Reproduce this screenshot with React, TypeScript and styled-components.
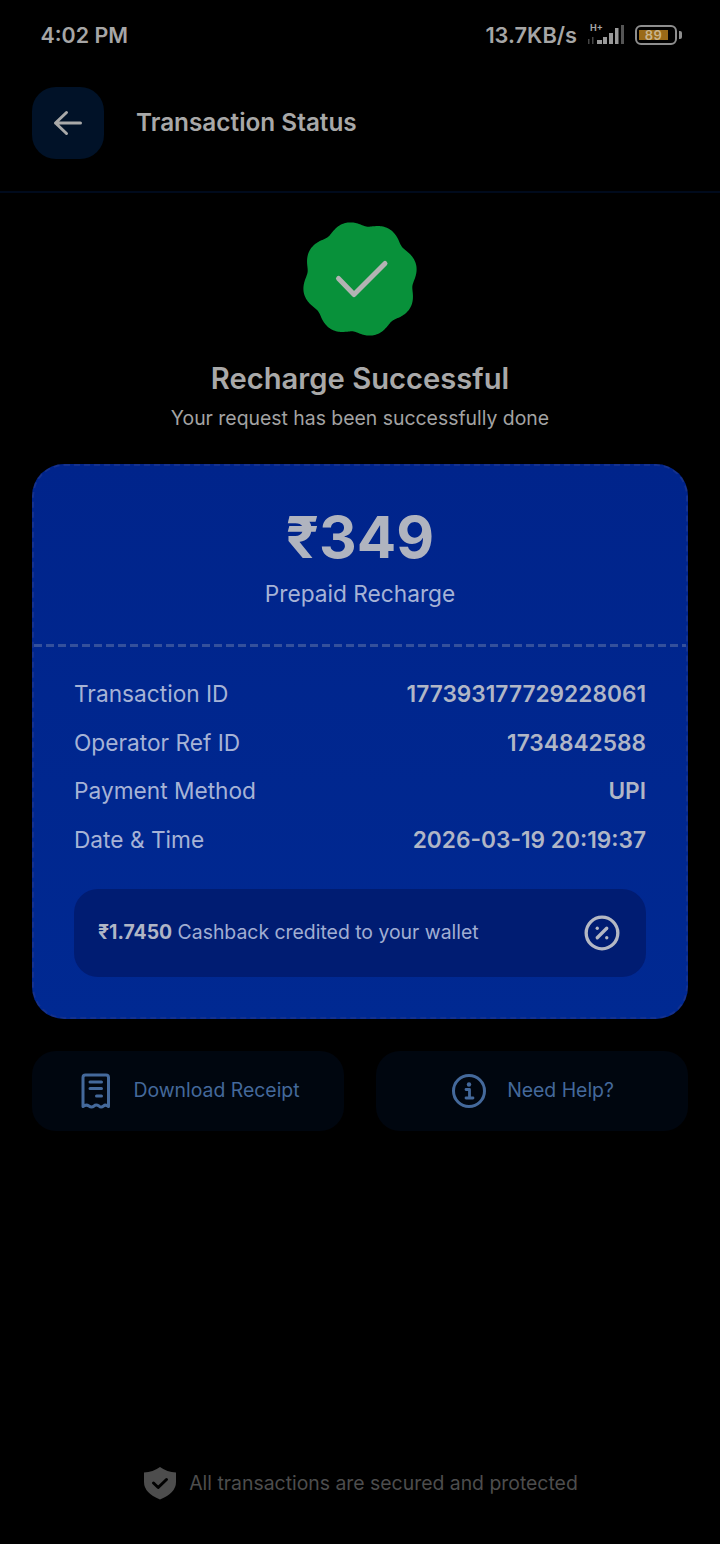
import React from 'react';
import styled, { createGlobalStyle } from 'styled-components';
import { CirclePercent } from 'lucide-react';

const GlobalStyle = createGlobalStyle`
  html, body {
    margin: 0;
    padding: 0;
    background: #000;
  }
  * {
    box-sizing: border-box;
  }
`;

const Page = styled.div`
  width: 720px;
  height: 1544px;
  background: #000;
  display: flex;
  flex-direction: column;
  font-family: Inter, "Noto Sans", sans-serif;
  color: #b3b3b3;
  overflow: hidden;
`;

const StatusBar = styled.div`
  height: 70px;
  padding: 0 37px 0 40.5px;
  display: flex;
  align-items: center;
  justify-content: space-between;
  font-size: 21.8px;
  font-weight: 600;
  color: #a6a6a6;
`;

const Clock = styled.span`
  font-size: 21.4px;
`;

const StatusRight = styled.div`
  display: flex;
  align-items: center;
  gap: 9px;
`;

const Signal = styled.div`
  position: relative;
  width: 38px;
  height: 24px;
`;

const SignalTag = styled.span`
  position: absolute;
  left: 4px;
  top: 0;
  font-size: 9px;
  line-height: 9px;
  font-weight: 700;
  color: #a6a6a6;
`;

const Battery = styled.div`
  width: 48px;
  height: 20px;
  margin-left: 2px;
  position: relative;
`;

const BatteryBody = styled.div`
  width: 42px;
  height: 20px;
  border: 2.5px solid #8e8e8e;
  border-radius: 6px;
  padding: 3px 2px;
  &::after {
    content: '';
    position: absolute;
    left: 44px;
    top: 6px;
    width: 2.5px;
    height: 8px;
    border-radius: 0 2px 2px 0;
    background: #8e8e8e;
  }
`;

const BatteryFill = styled.div`
  width: 29px;
  height: 10px;
  background: #9a6a17;
  font-size: 13px;
  line-height: 10px;
  font-weight: 600;
  text-align: center;
  color: #c9b48c;
  letter-spacing: 0.5px;
`;

const Header = styled.div`
  padding: 17px 32px 32px;
  display: flex;
  align-items: center;
  gap: 32px;
  border-bottom: 2px solid #000a1c;
`;

const BackButton = styled.div`
  width: 72px;
  height: 72px;
  border-radius: 24px;
  background: #011228;
  display: flex;
  align-items: center;
  justify-content: center;
`;

const HeaderTitle = styled.div`
  padding-bottom: 2px;
  font-size: 24.35px;
  font-weight: 600;
  color: #a8a8a8;
`;

const Hero = styled.div`
  padding-top: 29px;
  display: flex;
  flex-direction: column;
  align-items: center;
`;

const SuccessTitle = styled.div`
  margin-top: 23px;
  font-size: 29.2px;
  line-height: 40px;
  font-weight: 600;
  color: #a9a9a9;
`;

const SuccessSub = styled.div`
  margin-top: 4px;
  font-size: 19.4px;
  line-height: 30px;
  color: #a3a3a3;
`;

const Card = styled.div`
  margin: 31px 32px 0;
  height: 555px;
  border: 2px dashed #14318e;
  border-radius: 32px;
  background: linear-gradient(180deg, #00248b 0%, #002992 100%);
  background-origin: border-box;
  display: flex;
  flex-direction: column;
`;

const CardTop = styled.div`
  height: 178px;
  padding-top: 34px;
  text-align: center;
`;

const Amount = styled.div`
  font-size: 58.4px;
  line-height: 74px;
  font-weight: 700;
  color: #b0b4bf;
`;

const AmountLabel = styled.div`
  margin-top: 6px;
  font-size: 22.7px;
  line-height: 28px;
  color: #a6b3d6;
`;

const DashedLine = styled.div`
  height: 3px;
  background: repeating-linear-gradient(90deg, #34509c 0 8px, transparent 8px 12px);
`;

const CardBody = styled.div`
  flex: 1;
  padding: 33px 40px 40px;
  display: flex;
  flex-direction: column;
`;

const Rows = styled.div`
  display: flex;
  flex-direction: column;
  gap: 20.6px;
`;

const Row = styled.div`
  display: flex;
  justify-content: space-between;
  height: 28px;
  line-height: 28px;
  font-size: 22.7px;
`;

const RowLabel = styled.span`
  color: #a6b3d6;
`;

const RowValue = styled.span`
  font-weight: 600;
  color: #b0b6c6;
`;

const Cashback = styled.div`
  margin-top: 35px;
  height: 88px;
  padding: 0 24px;
  border-radius: 24px;
  background: #001c72;
  display: flex;
  align-items: center;
  justify-content: space-between;
  font-size: 19.4px;
  color: #a0aed2;
  span {
    padding-bottom: 2px;
  }
  b {
    font-weight: 700;
    color: #b0b6c6;
  }
  svg {
    color: #b4b8c4;
    margin-right: 1px;
  }
`;

const Actions = styled.div`
  margin: 32px 32px 0;
  display: grid;
  grid-template-columns: 1fr 1fr;
  gap: 32px;
`;

const ActionButton = styled.div`
  height: 80px;
  border-radius: 24px;
  background: #00060f;
  display: flex;
  align-items: center;
  justify-content: center;
  gap: 21px;
  font-size: 19.4px;
  color: #44699b;
  span {
    padding-bottom: 2px;
  }
`;

const Footer = styled.div`
  margin-top: auto;
  padding-bottom: 43px;
  display: flex;
  align-items: center;
  justify-content: center;
  gap: 13px;
  font-size: 19.4px;
  line-height: 36px;
  color: #4d4d4d;
`;

const badgePath = () => {
  const points: string[] = [];
  const offset = (-15 * Math.PI) / 180;
  for (let i = 0; i < 320; i++) {
    const a = (i / 320) * Math.PI * 2;
    const c = Math.cos(4 * (a - offset));
    // broad lobes, soft valleys
    const r = 50 + 7.35 * Math.sqrt(c * c + 0.15);
    const x = 58 + r * Math.sin(a);
    const y = 58 - r * Math.cos(a);
    points.push(`${x.toFixed(2)} ${y.toFixed(2)}`);
  }
  return `M${points.join('L')}Z`;
};

const BadgeSvg = styled.svg`
  margin: -1px;
`;

const SuccessBadge = () => (
  <BadgeSvg width="116" height="116" viewBox="0 0 116 116">
    <path d={badgePath()} fill="#08913a" />
    <path d="M36.5 57.5 L52 73.5 L83 42.5" fill="none" stroke="#b3b3b3" strokeWidth="5" strokeLinecap="round" strokeLinejoin="round" />
  </BadgeSvg>
);

const BackArrow = () => (
  <svg width="30" height="26" viewBox="0 0 30 26" fill="none" stroke="#a9a9a9" strokeWidth="3" strokeLinecap="round" strokeLinejoin="round">
    <path d="M2.5 13 H27.5 M13.5 2.5 L2.5 13 L13.5 23.5" />
  </svg>
);

const SignalBars = () => (
  <svg width="38" height="24" viewBox="0 0 38 24" fill="#9a9a9a">
    <rect x="2" y="16" width="1.5" height="5" opacity="0.45" />
    <rect x="6" y="14" width="1.5" height="7" opacity="0.45" />
    <rect x="11" y="17" width="5" height="4" />
    <rect x="17" y="14" width="4" height="7" />
    <rect x="23" y="10" width="4" height="11" />
    <rect x="29" y="5" width="3.5" height="16" />
    <rect x="35" y="2" width="3" height="19" opacity="0.55" />
  </svg>
);

const ReceiptIcon = () => (
  <svg width="36" height="36" viewBox="0 0 36 36" fill="none" stroke="#44699b" strokeWidth="3" strokeLinecap="round" strokeLinejoin="round">
    <path d="M7 33.5 V4.5 Q7 2 9.5 2 H30 Q32.5 2 32.5 4.5 V33.5 Q29.5 31 27.5 33 Q25 35 23 33 Q20 31 18 33 Q15.5 35 13 33 Q10 31 7 33.5 Z" />
    <path d="M14 9 H25.5 M14 15.5 H25.5 M20.5 23 H25.5" />
  </svg>
);

const InfoIcon = () => (
  <svg width="36" height="36" viewBox="0 0 36 36" fill="none">
    <circle cx="19" cy="18" r="15.5" stroke="#44699b" strokeWidth="3" />
    <circle cx="19" cy="11.5" r="2.2" fill="#44699b" />
    <path d="M16 16.5 H19.5 V24.5 M16 25 H23" stroke="#44699b" strokeWidth="2.8" strokeLinecap="round" strokeLinejoin="round" />
  </svg>
);

const ShieldIcon = () => (
  <svg width="34" height="34" viewBox="0 0 34 34">
    <path d="M18 1 Q25 6 34 6.5 V16 Q34 27 18 33.5 Q2 27 2 16 V6.5 Q11 6 18 1 Z" fill="#4d4d4d" />
    <path d="M11.5 17 L16.2 21.5 L24.5 13.5" fill="none" stroke="#000" strokeWidth="3" strokeLinecap="round" strokeLinejoin="round" />
  </svg>
);

const rows = [
  ['Transaction ID', '177393177729228061'],
  ['Operator Ref ID', '1734842588'],
  ['Payment Method', 'UPI'],
  ['Date & Time', '2026-03-19 20:19:37'],
];

export default function App() {
  return (
    <Page>
      <GlobalStyle />
      <StatusBar>
        <Clock>4:02 PM</Clock>
        <StatusRight>
          <span>13.7KB/s</span>
          <Signal>
            <SignalTag>H+</SignalTag>
            <SignalBars />
          </Signal>
          <Battery>
            <BatteryBody>
              <BatteryFill>89</BatteryFill>
            </BatteryBody>
          </Battery>
        </StatusRight>
      </StatusBar>
      <Header>
        <BackButton>
          <BackArrow />
        </BackButton>
        <HeaderTitle>Transaction Status</HeaderTitle>
      </Header>
      <Hero>
        <SuccessBadge />
        <SuccessTitle>Recharge Successful</SuccessTitle>
        <SuccessSub>Your request has been successfully done</SuccessSub>
      </Hero>
      <Card>
        <CardTop>
          <Amount>₹349</Amount>
          <AmountLabel>Prepaid Recharge</AmountLabel>
        </CardTop>
        <DashedLine />
        <CardBody>
          <Rows>
            {rows.map(([label, value]) => (
              <Row key={label}>
                <RowLabel>{label}</RowLabel>
                <RowValue>{value}</RowValue>
              </Row>
            ))}
          </Rows>
          <Cashback>
            <span>
              <b>₹1.7450</b> Cashback credited to your wallet
            </span>
            <CirclePercent size={38} strokeWidth={2.1} />
          </Cashback>
        </CardBody>
      </Card>
      <Actions>
        <ActionButton>
          <ReceiptIcon />
          <span>Download Receipt</span>
        </ActionButton>
        <ActionButton>
          <InfoIcon />
          <span>Need Help?</span>
        </ActionButton>
      </Actions>
      <Footer>
        <ShieldIcon />
        <span>All transactions are secured and protected</span>
      </Footer>
    </Page>
  );
}
